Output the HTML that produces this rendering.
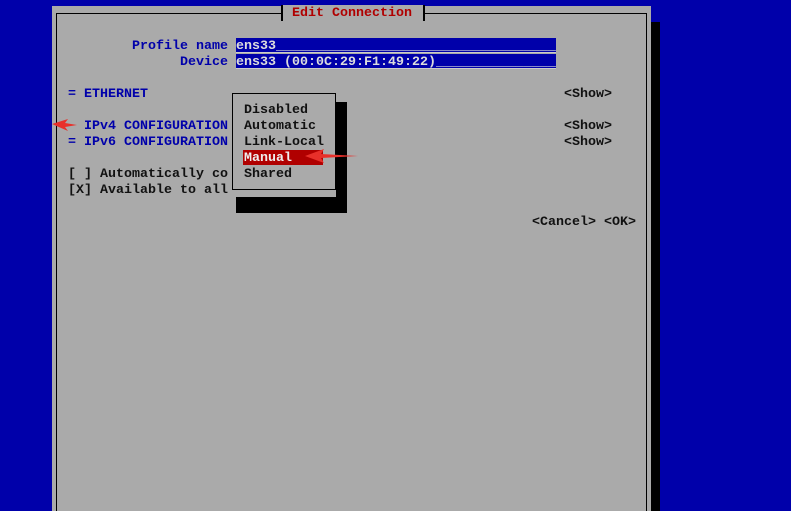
<!DOCTYPE html>
<html><head><style>
body{margin:0;width:791px;height:511px;background:#0000aa;position:relative;overflow:hidden;font-family:"Liberation Mono",monospace;font-size:13.33px;font-weight:bold}
div{position:absolute}
.t{white-space:pre;line-height:16px;height:16px;margin-top:2px}
.b{color:#0000aa}.k{color:#111}
</style></head><body>
<div style="left:52px;top:6px;width:599px;height:505px;background:#aaa"></div>
<div style="left:651px;top:22px;width:9px;height:489px;background:#000"></div>
<div style="left:56px;top:13px;width:591px;height:498px;border:1px solid #000;border-bottom:none;box-sizing:border-box"></div>
<div style="left:281px;top:5px;width:144px;height:16px;background:#aaa;border-left:2px solid #000;border-right:2px solid #000;box-sizing:border-box"></div>
<div class="t" style="left:292px;top:4px;color:#b00000">Edit Connection</div>

<div class="t b" style="left:132px;top:37px">Profile name</div>
<div class="t b" style="left:180px;top:53px">Device</div>
<div style="left:236px;top:38px;width:320px;height:14px;background:#0000aa;border-bottom:1px solid #ccc"></div>
<div style="left:236px;top:54px;width:320px;height:14px;background:#0000aa;border-bottom:1px solid #ccc"></div>
<div class="t" style="left:236px;top:37px;color:#ddd">ens33___________________________________</div>
<div class="t" style="left:236px;top:53px;color:#ddd">ens33 (00:0C:29:F1:49:22)_______________</div>

<div class="t b" style="left:68px;top:85px">= ETHERNET</div>
<div class="t k" style="left:564px;top:85px">&lt;Show&gt;</div>
<div class="t b" style="left:68px;top:117px">  IPv4 CONFIGURATION</div>
<div class="t k" style="left:564px;top:117px">&lt;Show&gt;</div>
<div class="t b" style="left:68px;top:133px">= IPv6 CONFIGURATION</div>
<div class="t k" style="left:564px;top:133px">&lt;Show&gt;</div>
<div class="t k" style="left:68px;top:165px">[ ] Automatically co</div>
<div class="t k" style="left:68px;top:181px">[X] Available to all</div>
<div class="t k" style="left:532px;top:213px">&lt;Cancel&gt; &lt;OK&gt;</div>

<div style="left:236px;top:102px;width:111px;height:111px;background:#000"></div>
<div style="left:228px;top:93px;width:108px;height:104px;background:#aaa"></div>
<div style="left:232px;top:93px;width:104px;height:97px;border:1px solid #000;box-sizing:border-box"></div>
<div class="t k" style="left:244px;top:101px">Disabled</div>
<div class="t k" style="left:244px;top:117px">Automatic</div>
<div class="t k" style="left:244px;top:133px">Link-Local</div>
<div style="left:243px;top:150px;width:80px;height:15px;background:#b00000"></div>
<div class="t" style="left:244px;top:149px;color:#eee">Manual</div>
<div class="t k" style="left:244px;top:165px">Shared</div>

<svg style="position:absolute;left:0;top:0" width="791" height="511">
<path d="M52 124 L68 119 L65 123 L77 125 L65 127 L68 131 Z" fill="#e8302a"/>
<path d="M305 156 L324 149 L321 154 L358 156 L321 158 L324 163 Z" fill="#e8302a"/>
</svg>
</body></html>
